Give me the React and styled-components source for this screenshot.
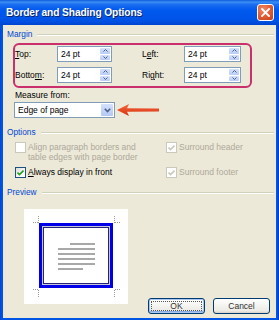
import React from 'react';
import styled, { createGlobalStyle } from 'styled-components';

const Global = createGlobalStyle`
  html, body { margin: 0; padding: 0; background: #ffffff; }
  body { font-family: "Liberation Sans", Arial, sans-serif; }
  #root { width: 279px; height: 320px; }
`;

const Window = styled.div`
  width: 279px;
  height: 320px;
  display: flex;
  flex-direction: column;
  background: #0055e5;
  overflow: hidden;
`;

const TitleBar = styled.div`
  height: 25px;
  flex: none;
  display: flex;
  align-items: center;
  justify-content: space-between;
  padding: 0 5px 0 6px;
  box-sizing: border-box;
  background: linear-gradient(
    #0a5bdc 0%,
    #3c8ef3 8%,
    #1a6ef0 18%,
    #0058ee 40%,
    #0055ea 70%,
    #0050e0 88%,
    #0043cf 100%
  );
`;

const Title = styled.span`
  color: #ffffff;
  font-weight: bold;
  font-size: 10.2px;
  letter-spacing: -0.1px;
  text-shadow: 1px 1px 0 #0a246a;
`;

const CloseButton = styled.div`
  width: 15px;
  height: 15px;
  border: 1px solid #ffffff;
  border-radius: 3px;
  display: flex;
  align-items: center;
  justify-content: center;
  background: radial-gradient(circle at 35% 30%, #f08a68 0%, #e2603a 45%, #c43b16 100%);
`;

const Frame = styled.div`
  flex: 1;
  display: flex;
  padding: 0 3px 3px 3px;
  background: linear-gradient(90deg, #0046d8, #0055e5 2px, #0055e5 calc(100% - 2px), #0035c5);
  border-bottom: 0;
`;

const Body = styled.div`
  flex: 1;
  background: #ece9d8;
  display: flex;
  flex-direction: column;
  padding: 0 4px 4px 4px;
  font-size: 8.5px;
  color: #000000;
`;

const GroupHeader = styled.div`
  height: 12px;
  margin-top: ${p => p.$top}px;
  display: flex;
  align-items: center;
  color: #0046d5;
  font-size: 8.3px;
  &::after {
    content: "";
    flex: 1;
    height: 1px;
    margin-left: 5px;
    margin-right: -2px;
    background: #d0d0bf;
    box-shadow: 0 1px 0 #ffffff;
  }
`;

const Highlight = styled.div`
  margin: 3px 0 0 6px;
  width: 239px;
  height: 45px;
  box-sizing: border-box;
  border: 2px solid #c9306c;
  border-radius: 6px;
  padding-top: 1px;
  display: grid;
  grid-template-columns: 42px 55px 30px 42px 57px;
  grid-auto-rows: 16px;
  row-gap: 5px;
  align-items: center;
`;

const FieldLabel = styled.span`
  line-height: 10px;
  padding-left: ${p => (p.$pad ? 0 : 0)}px;
`;

const U = styled.span`
  text-decoration: underline;
`;

const SpinBox = styled.div`
  height: 16px;
  box-sizing: border-box;
  border: 1px solid #7f9db9;
  background: #ffffff;
  display: flex;
  align-items: stretch;
`;

const FieldText = styled.span`
  flex: 1;
  padding-left: 3px;
  line-height: 14px;
  white-space: nowrap;
`;

const SpinButtons = styled.div`
  width: 10px;
  margin: 1px;
  display: flex;
  flex-direction: column;
  gap: 1px;
`;

const SpinHalf = styled.div`
  flex: 1;
  display: flex;
  align-items: center;
  justify-content: center;
  border-radius: 1px;
  background: linear-gradient(#d4e1fc, #b9cdf7);
`;

const MeasureLabel = styled.div`
  margin: 2px 0 0 8px;
  height: 10px;
  line-height: 10px;
`;

const DropRow = styled.div`
  margin: 2px 0 0 7px;
  height: 16px;
  display: flex;
  align-items: center;
`;

const Dropdown = styled.div`
  width: 101px;
  height: 16px;
  box-sizing: border-box;
  border: 1px solid #7f9db9;
  background: #ffffff;
  display: flex;
`;

const DropButton = styled.div`
  width: 12px;
  margin: 1px;
  border-radius: 1px;
  display: flex;
  align-items: center;
  justify-content: center;
  background: linear-gradient(#d4e1fc, #b4c8f6);
`;

const CheckGrid = styled.div`
  margin: 4px 0 0 8px;
  display: grid;
  grid-template-columns: 151px auto;
  row-gap: 5px;
`;

const CheckItem = styled.div`
  display: flex;
  align-items: flex-start;
  gap: 2px;
  line-height: 10px;
  color: ${p => (p.$disabled ? '#aca899' : '#000000')};
`;

const Box = styled.div`
  width: 11px;
  height: 11px;
  flex: none;
  box-sizing: border-box;
  border: 1px solid ${p => (p.$disabled ? '#cac8bb' : '#1c5180')};
  background: ${p => (p.$disabled ? '#ffffff' : 'linear-gradient(135deg, #dcdcd7, #ffffff 80%)')};
  display: flex;
  align-items: center;
  justify-content: center;
`;

const BottomRow = styled.div`
  margin-top: 11px;
  height: 105px;
  display: flex;
`;

const PreviewBox = styled.div`
  margin-left: 17px;
  width: 104px;
  height: 95px;
  background: #ffffff;
  align-self: flex-start;
`;

const Buttons = styled.div`
  margin-left: auto;
  margin-right: 2px;
  align-self: flex-end;
  display: flex;
  gap: 8px;
`;

const Button = styled.div`
  position: relative;
  width: 57px;
  height: 16px;
  box-sizing: border-box;
  border: 1px solid #003c74;
  border-radius: 3px;
  display: flex;
  align-items: center;
  justify-content: center;
  color: #333333;
  background: linear-gradient(#ffffff 0%, #f3f3ef 50%, #ecebe6 85%, #d6d0c5 100%);
  box-shadow: ${p => (p.$default ? 'inset 0 0 0 1px #a9c6ee, inset 0 -1px 0 1px #89ade4' : 'none')};
  &::after {
    content: "";
    display: ${p => (p.$default ? 'block' : 'none')};
    position: absolute;
    inset: 2px;
    border: 1px dotted #555555;
  }
`;

const Close = () => (
  <CloseButton>
    <svg width="9" height="9" viewBox="0 0 9 9">
      <path d="M1 1 L8 8 M8 1 L1 8" stroke="#ffffff" strokeWidth="1.8" strokeLinecap="square" />
    </svg>
  </CloseButton>
);

const Arrow = ({ up }) => (
  <svg width="5" height="3" viewBox="0 0 5 3">
    <path d={up ? 'M0.5 2.5 L2.5 0.5 L4.5 2.5' : 'M0.5 0.5 L2.5 2.5 L4.5 0.5'} fill="none" stroke="#4d6185" strokeWidth="1" />
  </svg>
);

const Spin = ({ value }) => (
  <SpinBox>
    <FieldText>{value}</FieldText>
    <SpinButtons>
      <SpinHalf><Arrow up /></SpinHalf>
      <SpinHalf><Arrow /></SpinHalf>
    </SpinButtons>
  </SpinBox>
);

const Check = ({ checked, disabled }) => (
  <Box $disabled={disabled}>
    {checked && (
      <svg width="7" height="7" viewBox="0 0 7 7">
        <path d="M0.5 3.5 L2.5 5.5 L6.5 1.5" fill="none" stroke={disabled ? '#cac8bb' : '#21a121'} strokeWidth="1.6" />
      </svg>
    )}
  </Box>
);

const RedArrow = () => (
  <svg width="44" height="14" viewBox="0 0 44 14" style={{ marginLeft: 2 }}>
    <defs>
      <linearGradient id="ra" x1="0" y1="0" x2="0" y2="1">
        <stop offset="0" stopColor="#f4683c" />
        <stop offset="1" stopColor="#d8300e" />
      </linearGradient>
    </defs>
    <polygon points="0,7 12,1 10,5.2 42,5.6 42,8.4 10,8.8 12,13" fill="url(#ra)" />
  </svg>
);

const PagePreview = () => (
  <svg width="104" height="95" viewBox="0 0 104 95">
    <g stroke="#9a9a9a" strokeWidth="1" strokeDasharray="1 1">
      <path d="M14.5 7 V14 M9 13.5 H14" />
      <path d="M90.5 7 V14 M91 13.5 H97" />
      <path d="M14.5 81 V88 M9 80.5 H14" />
      <path d="M90.5 81 V88 M91 80.5 H97" />
    </g>
    <rect x="16.5" y="15.5" width="71" height="62" fill="none" stroke="#0000e8" strokeWidth="3" />
    <rect x="18.5" y="17.5" width="67" height="58" fill="none" stroke="#c8c8d8" strokeWidth="1" />
    <rect x="19.5" y="18.5" width="65" height="56" fill="none" stroke="#24247a" strokeWidth="1" />
    <g fill="#a8a8a8">
      <rect x="46" y="34" width="25" height="2" />
      <rect x="34" y="39" width="37" height="2" />
      <rect x="34" y="44" width="37" height="2" />
      <rect x="34" y="49" width="37" height="2" />
      <rect x="34" y="54" width="37" height="2" />
      <rect x="34" y="59" width="25" height="2" />
    </g>
  </svg>
);

export default function App() {
  return (
    <>
      <Global />
      <Window>
        <TitleBar>
          <Title>Border and Shading Options</Title>
          <Close />
        </TitleBar>
        <Frame>
          <Body>
            <GroupHeader $top={3}>Margin</GroupHeader>
            <Highlight>
              <FieldLabel><U>T</U>op:</FieldLabel>
              <Spin value="24 pt" />
              <span />
              <FieldLabel>L<U>e</U>ft:</FieldLabel>
              <Spin value="24 pt" />
              <FieldLabel>Botto<U>m</U>:</FieldLabel>
              <Spin value="24 pt" />
              <span />
              <FieldLabel>Ri<U>g</U>ht:</FieldLabel>
              <Spin value="24 pt" />
            </Highlight>
            <MeasureLabel>Measure from:</MeasureLabel>
            <DropRow>
              <Dropdown>
                <FieldText>Edge of page</FieldText>
                <DropButton>
                  <svg width="7" height="5" viewBox="0 0 7 5">
                    <path d="M0.8 0.8 L3.5 3.5 L6.2 0.8" fill="none" stroke="#4d6185" strokeWidth="1.6" />
                  </svg>
                </DropButton>
              </Dropdown>
              <RedArrow />
            </DropRow>
            <GroupHeader $top={8}>Options</GroupHeader>
            <CheckGrid>
              <CheckItem $disabled>
                <Check disabled />
                <span>Align paragraph borders and<br />table edges with page border</span>
              </CheckItem>
              <CheckItem $disabled>
                <Check checked disabled />
                <span>Surround header</span>
              </CheckItem>
              <CheckItem>
                <Check checked />
                <span><U>A</U>lways display in front</span>
              </CheckItem>
              <CheckItem $disabled>
                <Check checked disabled />
                <span>Surround footer</span>
              </CheckItem>
            </CheckGrid>
            <GroupHeader $top={8}>Preview</GroupHeader>
            <BottomRow>
              <PreviewBox>
                <PagePreview />
              </PreviewBox>
              <Buttons>
                <Button $default>OK</Button>
                <Button>Cancel</Button>
              </Buttons>
            </BottomRow>
          </Body>
        </Frame>
      </Window>
    </>
  );
}
